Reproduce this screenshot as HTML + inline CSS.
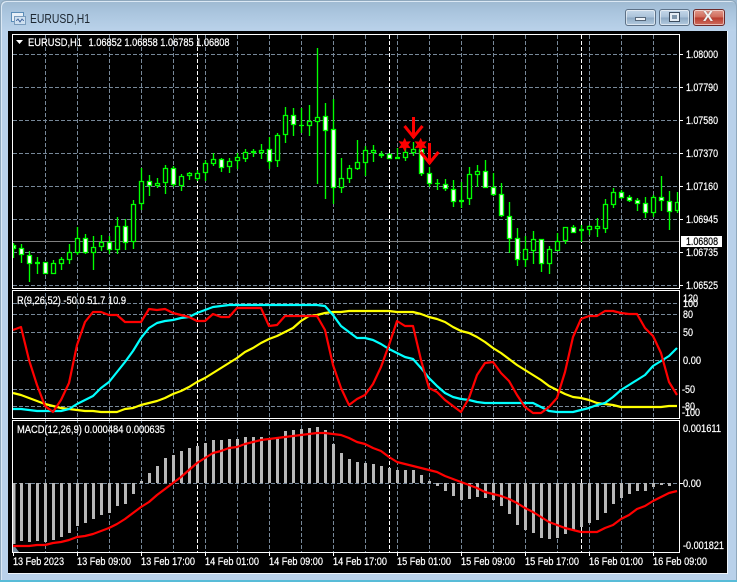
<!DOCTYPE html>
<html><head><meta charset="utf-8"><style>
html,body{margin:0;padding:0;background:#fff}
#w{position:relative;width:737px;height:582px;overflow:hidden;background:#b9d1ea}
#t{position:absolute;left:0;top:0;width:737px;height:31px;background:linear-gradient(#9db8d0,#aac5de 40%,#bad2ea)}
#e{position:absolute;left:0;top:0;width:735px;height:580px;border:1px solid #8fa8bd;border-radius:6px 6px 0 0;box-shadow:inset 1px 1px 0 #dbe8f4}
#c{position:absolute;left:0;bottom:0;width:737px;height:2px;background:#58bcd8}
.b{position:absolute;top:9px;height:17px;box-sizing:border-box;border:1px solid #5d7187;border-radius:3px;box-shadow:inset 0 0 0 1px rgba(255,255,255,.55);background:linear-gradient(#c4d7e9,#aac2d9 48%,#8da9c4 52%,#b4cbe0)}
svg{position:absolute;left:0;top:0}
text{font-family:"Liberation Sans",sans-serif;font-size:11px;fill:#fff;stroke:#fff;stroke-width:.22}
</style></head><body><div id="w">
<div id="t"></div><div id="e"></div><div id="c"></div>
<div style="position:absolute;left:8px;top:31px;width:719px;height:542px;background:#000;border-right:1px solid #eef4fa;border-bottom:1px solid #eef4fa"></div>
<div class="b" style="left:625px;width:31px"><div style="position:absolute;left:9px;top:7px;width:11px;height:4px;background:#eef3f8;border:1px solid #56677a;box-sizing:border-box"></div></div>
<div class="b" style="left:659px;width:31px"><div style="position:absolute;left:9px;top:2px;width:11px;height:10px;border:1px solid #3c4c5e;background:#e6edf4;box-sizing:border-box"><div style="position:absolute;left:2px;top:2px;width:5px;height:4px;background:#7f95aa"></div></div></div>
<div class="b" style="left:693px;width:32px;border-color:#6d2a2a;background:linear-gradient(#e29a8c,#cf6a5a 48%,#b93c2e 52%,#cf6d5e)"><div style="position:absolute;left:9px;top:-2px;font:bold 15px/18px 'Liberation Sans',sans-serif;color:#f4f4f4;text-shadow:0 0 1px #555">X</div></div>
<svg width="737" height="582" viewBox="0 0 737 582" xmlns="http://www.w3.org/2000/svg">
<text x="30" y="23" textLength="60" lengthAdjust="spacingAndGlyphs" style="font-size:13px;fill:#1c2630;stroke:none">EURUSD,H1</text>
<g fill="none" stroke-width="1" shape-rendering="crispEdges">
<path fill="#e8f0f8" stroke="#5b8db8" d="M11.5 12.5h12v9h-12z"/><path fill="#cfe0f0" stroke="#7a9cbc" d="M14.5 16.5h11v8h-11z"/><path stroke="#5577aa" d="M16 21l2-2 2 3 2-3 2 2"/>
<path stroke="#778899" stroke-dasharray="4 2" d="M13 54.5H679M13 87.5H679M13 120.5H679M13 153.5H679M13 186.5H679M13 219.5H679M13 252.5H679M13 285.5H679M13 303.5H679M13 314.5H679M13 332.5H679M13 360.5H679M13 389.5H679M13 406.5H679M13 483.5H679"/>
<path stroke="#778899" stroke-dasharray="4 2" d="M45.5 35V552M77.5 35V552M109.5 35V552M141.5 35V552M173.5 35V552M205.5 35V552M237.5 35V552M269.5 35V552M301.5 35V552M333.5 35V552M365.5 35V552M397.5 35V552M429.5 35V552M461.5 35V552M493.5 35V552M525.5 35V552M557.5 35V552M589.5 35V552M621.5 35V552M653.5 35V552"/>
<path stroke="#fff" stroke-dasharray="4 2" d="M197.5 35V552M389.5 35V552M581.5 35V552"/>
<path stroke="#808080" d="M13 241.5H679"/>
<path stroke="#b8b8b8" stroke-width="3" d="M14 483V544M21.5 483V541M29.5 483V542M37.5 483V541M45.5 483V542M53.5 483V540M61.5 483V537M69.5 483V533M77.5 483V526M85.5 483V523M93.5 483V519M101.5 483V515M109.5 483V513M117.5 483V506M125.5 483V504M133.5 483V494M141.5 483V481M149.5 483V473M157.5 483V466M165.5 483V458M173.5 483V455M181.5 483V451M189.5 483V448M197.5 483V446M205.5 483V443M213.5 483V440M221.5 483V440M229.5 483V439M237.5 483V439M245.5 483V437M253.5 483V437M261.5 483V437M269.5 483V439M277.5 483V437M285.5 483V431M293.5 483V430M301.5 483V429M309.5 483V428M317.5 483V427M325.5 483V430M333.5 483V444M341.5 483V453M349.5 483V459M357.5 483V462M365.5 483V463M373.5 483V464M381.5 483V466M389.5 483V468M397.5 483V470M405.5 483V470M413.5 483V470M421.5 483V475M429.5 483V481M437.5 483V486M445.5 483V491M453.5 483V496M461.5 483V500M469.5 483V499M477.5 483V497M485.5 483V498M493.5 483V500M501.5 483V506M509.5 483V514M517.5 483V525M525.5 483V530M533.5 483V533M541.5 483V538M549.5 483V539M557.5 483V538M565.5 483V534M573.5 483V530M581.5 483V527M589.5 483V523M597.5 483V520M605.5 483V513M613.5 483V504M621.5 483V498M629.5 483V494M637.5 483V491M645.5 483V491M653.5 483V487M661.5 483V485M669.5 483V486"/>
</g>
<g fill="none" stroke-width="1.35">
<path stroke="#00ff00" d="M13.5 243V258M21.5 244V263M29.5 251V282M37.5 257V274M45.5 262V274M53.5 260V274M61.5 257V270M69.5 244V264M77.5 227V255M85.5 234V254M93.5 236V270M101.5 235V251M109.5 236V254M117.5 217V254M125.5 219V250M133.5 200V249M141.5 168V210M149.5 175V196M157.5 178V188M165.5 165V194M173.5 166V187M181.5 174V191M189.5 172V180M197.5 170V181M205.5 160V181M213.5 153V166M221.5 158V172M229.5 158V173M237.5 153V169M245.5 149V162M253.5 149V157M261.5 144V159M269.5 137V169M277.5 133V167M285.5 107V143M293.5 108V136M301.5 108V133M309.5 105V136M317.5 48V184M325.5 103V199M333.5 99V204M341.5 158V193M349.5 165V183M357.5 140V170M365.5 146V176M373.5 145V162M381.5 151V158M389.5 153V159M397.5 148V159M405.5 147V161M413.5 142V156M421.5 149V176M429.5 167V187M437.5 179V190M445.5 179V191M453.5 180V207M461.5 182V208M469.5 167V205M477.5 165V187M485.5 160V188M493.5 173V196M501.5 183V217M509.5 202V253M517.5 228V266M525.5 236V267M533.5 231V264M541.5 239V272M549.5 246V274M557.5 233V251M565.5 227V244M573.5 225V233M581.5 225V242M589.5 225V235M597.5 218V237M605.5 199V233M613.5 188V208M621.5 190V199M629.5 195V202M637.5 198V211M645.5 197V218M653.5 195V217M661.5 176V211M669.5 191V230M677.5 192V213"/>
<path stroke="#00ff00" d="M35 262.5h5M35 263.5h5M299 125.5h5M395 157.5h5M395 158.5h5M435 183.5h5M459 200.5h5M459 201.5h5M579 229.5h5M579 230.5h5"/>
<path stroke="#00ff00" fill="#000" d="M51.5 263.5h4v10h-4zM59.5 259.5h4v4h-4zM67.5 252.5h4v7h-4zM75.5 238.5h4v14h-4zM91.5 247.5h4v5h-4zM99.5 242.5h4v4h-4zM115.5 226.5h4v23h-4zM131.5 204.5h4v37h-4zM139.5 181.5h4v22h-4zM155.5 183.5h4v2h-4zM163.5 168.5h4v14h-4zM179.5 176.5h4v9h-4zM187.5 173.5h4v2h-4zM195.5 173.5h4v5h-4zM203.5 163.5h4v9h-4zM211.5 159.5h4v4h-4zM227.5 161.5h4v5h-4zM235.5 157.5h4v3h-4zM243.5 152.5h4v6h-4zM251.5 151.5h4v1h-4zM259.5 150.5h4v2h-4zM275.5 135.5h4v25h-4zM283.5 115.5h4v19h-4zM307.5 121.5h4v4h-4zM315.5 117.5h4v4h-4zM339.5 178.5h4v9h-4zM347.5 168.5h4v10h-4zM355.5 162.5h4v6h-4zM363.5 150.5h4v12h-4zM371.5 150.5h4v2h-4zM379.5 154.5h4v1h-4zM403.5 152.5h4v5h-4zM411.5 149.5h4v3h-4zM467.5 174.5h4v24h-4zM475.5 171.5h4v3h-4zM523.5 249.5h4v10h-4zM531.5 239.5h4v11h-4zM547.5 249.5h4v14h-4zM555.5 241.5h4v9h-4zM563.5 227.5h4v13h-4zM587.5 226.5h4v3h-4zM595.5 226.5h4v2h-4zM603.5 204.5h4v24h-4zM611.5 192.5h4v12h-4zM651.5 197.5h4v15h-4zM675.5 202.5h3v8h-3z"/>
<path stroke="#00ff00" fill="#fff" d="M13.5 245.5h2v3h-2zM19.5 248.5h4v6h-4zM27.5 255.5h4v8h-4zM43.5 262.5h4v11h-4zM83.5 238.5h4v14h-4zM107.5 242.5h4v7h-4zM123.5 226.5h4v16h-4zM147.5 181.5h4v4h-4zM171.5 168.5h4v16h-4zM219.5 159.5h4v8h-4zM267.5 149.5h4v12h-4zM291.5 115.5h4v9h-4zM323.5 116.5h4v14h-4zM331.5 129.5h4v58h-4zM387.5 154.5h4v4h-4zM419.5 149.5h4v24h-4zM427.5 173.5h4v10h-4zM443.5 184.5h4v4h-4zM451.5 189.5h4v12h-4zM483.5 171.5h4v16h-4zM491.5 187.5h4v7h-4zM499.5 194.5h4v21h-4zM507.5 216.5h4v22h-4zM515.5 238.5h4v21h-4zM539.5 239.5h4v24h-4zM571.5 227.5h4v5h-4zM619.5 192.5h4v5h-4zM627.5 197.5h4v3h-4zM635.5 200.5h4v3h-4zM643.5 203.5h4v9h-4zM659.5 197.5h4v3h-4zM667.5 201.5h4v10h-4z"/>
</g>
<g fill="none" stroke-width="1" shape-rendering="crispEdges">
<path stroke="#fff" d="M12.5 34.5H679.5V288.5H12.5ZM12.5 290.5H679.5V418.5H12.5ZM12.5 420.5H679.5V552.5H12.5Z"/>
<path stroke="#fff" d="M679 54.5h4M679 87.5h4M679 120.5h4M679 153.5h4M679 186.5h4M679 219.5h4M679 252.5h4M679 285.5h4M679 483.5h4M13.5 552v4M77.5 552v4M141.5 552v4M205.5 552v4M269.5 552v4M333.5 552v4M397.5 552v4M461.5 552v4M525.5 552v4M589.5 552v4M653.5 552v4"/>
</g>
<polygon points="13,544 19,552 13,552" fill="#778899"/>
<g fill="none" stroke-width="2.2" stroke-linejoin="round">
<polyline stroke="#ffff00" points="13,393 21,395 29,398 37,401 45,404 53,406 61,408 69,409 77,410 85,411 93,411 101,412 109,412 117,412 125,409 133,408 141,405 149,403 157,401 165,398 173,394 181,391 189,387 197,382 205,378 213,373 221,368 229,363 237,358 245,352 253,348 261,343 269,339 277,336 285,332 293,328 301,321 309,316 317,315 325,313 333,312 341,312 349,311 357,311 365,311 373,311 381,311 389,311 397,312 405,312 413,312 421,314 429,317 437,319 445,322 453,327 461,331 469,333 477,337 485,342 493,348 501,353 509,359 517,365 525,370 533,375 541,380 549,386 557,390 565,394 573,397 581,398 589,400 597,403 605,404 613,405 621,407 629,407 637,407 645,407 653,407 661,407 669,406 677,406"/>
<polyline stroke="#00ffff" points="13,409 21,409 29,410 37,411 45,411 53,411 61,411 69,409 77,404 85,400 93,396 101,388 109,382 117,372 125,362 133,351 141,338 149,328 157,323 165,321 173,320 181,318 189,317 197,313 205,310 213,307 221,306 229,305 237,305 245,305 253,305 261,305 269,305 277,305 285,305 293,305 301,305 309,305 317,305 325,306 333,315 341,326 349,332 357,338 365,338 373,340 381,344 389,349 397,353 405,357 413,359 421,368 429,378 437,386 445,393 453,397 461,399 469,400 477,402 485,403 493,403 501,403 509,403 517,403 525,403 533,403 541,407 549,411 557,412 565,412 573,412 581,410 589,408 597,405 605,403 613,397 621,390 629,385 637,380 645,375 653,366 661,361 669,356 677,348"/>
<polyline stroke="#ff0000" points="13,330 21,327 29,360 37,385 45,406 53,412 61,400 69,383 77,345 85,322 93,312 101,312 109,315 117,315 125,322 133,322 141,322 149,309 157,310 165,309 173,313 181,315 189,317 197,321 205,321 213,314 221,317 229,317 237,308 245,308 253,308 261,308 269,326 277,325 285,316 293,316 301,316 309,316 317,316 325,330 333,365 341,388 349,405 357,399 365,395 373,384 381,367 389,345 397,321 405,326 413,326 421,360 429,388 437,392 445,400 453,406 461,412 469,398 477,375 485,363 493,362 501,373 509,381 517,395 525,407 533,413 541,413 549,407 557,398 565,372 573,337 581,319 589,316 597,316 605,311 613,311 621,313 629,314 637,314 645,328 653,336 661,353 669,382 677,395"/>
<polyline stroke="#ff0000" points="13,546 21,546 29,546 37,545 45,545 53,543 61,542 69,540 77,537 85,536 93,534 101,531 109,528 117,524 125,519 133,513 141,507 149,502 157,495 165,489 173,483 181,477 189,470 197,463 205,458 213,453 221,451 229,448 237,447 245,444 253,442 261,440 269,439 277,438 285,437 293,436 301,435 309,434 317,433 325,433 333,434 341,435 349,438 357,442 365,444 373,448 381,451 389,457 397,462 405,464 413,466 421,468 429,470 437,472 445,476 453,479 461,482 469,485 477,488 485,492 493,494 501,496 509,499 517,503 525,508 533,512 541,517 549,522 557,525 565,528 573,530 581,532 589,532 597,532 605,528 613,525 621,519 629,515 637,509 645,506 653,501 661,497 669,493 677,491"/>
</g>
<path fill="none" stroke="#ff0000" stroke-width="3" d="M413.5 117V138M404.5 126l9 11 9-11M429.5 143V164M420.5 152l9 11 9-11"/>
<polygon fill="#ff0000" transform="translate(404.7 144.7)" points="0,-7 1.8,-3.1 6.1,-3.5 3.6,0 6.1,3.5 1.8,3.1 0,7 -1.8,3.1 -6.1,3.5 -3.6,0 -6.1,-3.5 -1.8,-3.1"/>
<polygon fill="#ff0000" transform="translate(420.7 144.7)" points="0,-7 1.8,-3.1 6.1,-3.5 3.6,0 6.1,3.5 1.8,3.1 0,7 -1.8,3.1 -6.1,3.5 -3.6,0 -6.1,-3.5 -1.8,-3.1"/>
<polygon fill="#fff" points="16,40 23,40 19.5,44"/>
<text x="28" y="46" textLength="54" lengthAdjust="spacingAndGlyphs">EURUSD,H1</text>
<text x="88.5" y="46" textLength="141" lengthAdjust="spacingAndGlyphs">1.06852 1.06858 1.06785 1.06808</text>
<text x="17" y="304" textLength="109" lengthAdjust="spacingAndGlyphs">R(9,26,52) -50.0 51.7 10.9</text>
<text x="17" y="433" textLength="148" lengthAdjust="spacingAndGlyphs">MACD(12,26,9) 0.000484 0.000635</text>
<text x="686" y="58" textLength="32" lengthAdjust="spacingAndGlyphs">1.08000</text>
<text x="686" y="91" textLength="32" lengthAdjust="spacingAndGlyphs">1.07790</text>
<text x="686" y="124" textLength="32" lengthAdjust="spacingAndGlyphs">1.07580</text>
<text x="686" y="157" textLength="32" lengthAdjust="spacingAndGlyphs">1.07370</text>
<text x="686" y="190" textLength="32" lengthAdjust="spacingAndGlyphs">1.07160</text>
<text x="686" y="223" textLength="32" lengthAdjust="spacingAndGlyphs">1.06945</text>
<text x="686" y="256" textLength="32" lengthAdjust="spacingAndGlyphs">1.06735</text>
<text x="686" y="289" textLength="32" lengthAdjust="spacingAndGlyphs">1.06525</text>
<rect x="681" y="236" width="41" height="11" fill="#fff"/>
<text x="686" y="245" textLength="32" lengthAdjust="spacingAndGlyphs" style="fill:#000;stroke:#000">1.06808</text>
<text x="683" y="302" textLength="15" lengthAdjust="spacingAndGlyphs">120</text>
<text x="683" y="307" textLength="15" lengthAdjust="spacingAndGlyphs">100</text>
<text x="683" y="318" textLength="10" lengthAdjust="spacingAndGlyphs">80</text>
<text x="683" y="336" textLength="10" lengthAdjust="spacingAndGlyphs">50</text>
<text x="683" y="364" textLength="18" lengthAdjust="spacingAndGlyphs">0.00</text>
<text x="682" y="393" textLength="13" lengthAdjust="spacingAndGlyphs">-50</text>
<text x="682" y="410" textLength="13" lengthAdjust="spacingAndGlyphs">-80</text>
<text x="682" y="416" textLength="18" lengthAdjust="spacingAndGlyphs">-100</text>
<text x="683" y="432" textLength="38" lengthAdjust="spacingAndGlyphs">0.001611</text>
<text x="683" y="487" textLength="18" lengthAdjust="spacingAndGlyphs">0.00</text>
<text x="683" y="549" textLength="41" lengthAdjust="spacingAndGlyphs">-0.001821</text>
<text x="13" y="565" textLength="51" lengthAdjust="spacingAndGlyphs">13 Feb 2023</text>
<text x="77" y="565" textLength="54" lengthAdjust="spacingAndGlyphs">13 Feb 09:00</text>
<text x="141" y="565" textLength="54" lengthAdjust="spacingAndGlyphs">13 Feb 17:00</text>
<text x="205" y="565" textLength="54" lengthAdjust="spacingAndGlyphs">14 Feb 01:00</text>
<text x="269" y="565" textLength="54" lengthAdjust="spacingAndGlyphs">14 Feb 09:00</text>
<text x="333" y="565" textLength="54" lengthAdjust="spacingAndGlyphs">14 Feb 17:00</text>
<text x="397" y="565" textLength="54" lengthAdjust="spacingAndGlyphs">15 Feb 01:00</text>
<text x="461" y="565" textLength="54" lengthAdjust="spacingAndGlyphs">15 Feb 09:00</text>
<text x="525" y="565" textLength="54" lengthAdjust="spacingAndGlyphs">15 Feb 17:00</text>
<text x="589" y="565" textLength="54" lengthAdjust="spacingAndGlyphs">16 Feb 01:00</text>
<text x="653" y="565" textLength="54" lengthAdjust="spacingAndGlyphs">16 Feb 09:00</text>
</svg>
</div></body></html>
